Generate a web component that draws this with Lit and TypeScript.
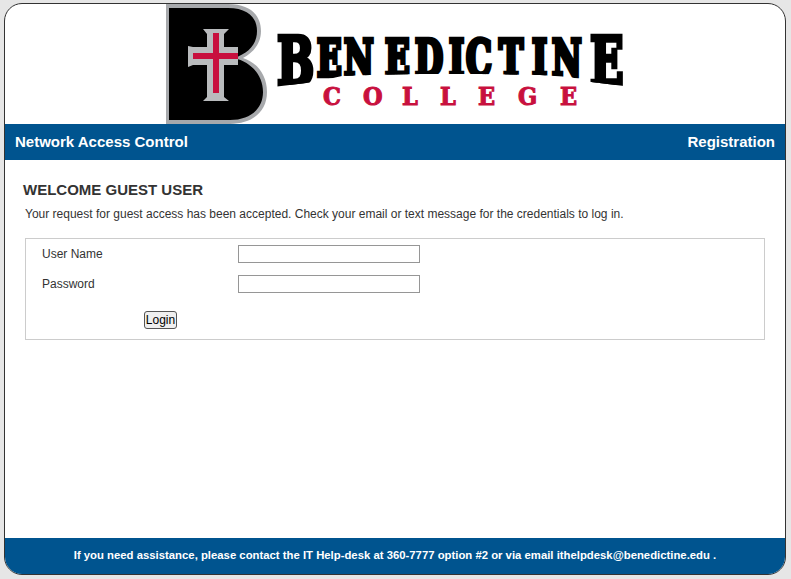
import { LitElement, html, css, svg } from "lit";
import { customElement } from "lit/decorators.js";

// Horizontal squeeze of the wordmark; left edges below are in logo coordinates.
const SQUEEZE = 0.72;
const at = (xs: number[]) => xs.map((x) => (x / SQUEEZE).toFixed(1)).join(" ");
const MID_X = [317, 344, 385, 415, 449, 466, 499, 532, 552];
const COLLEGE_X = [323, 363, 402, 440, 478, 518, 560];

@customElement("app-root")
export class AppRoot extends LitElement {
  static styles = css`
    :host {
      display: block;
      height: 579px;
      box-sizing: border-box;
      padding: 3px 5px 4px 4px;
      background: #e6e6e6;
      font-family: "Liberation Sans", Arial, sans-serif;
      color: #333;
    }
    .card {
      height: 100%;
      box-sizing: border-box;
      display: flex;
      flex-direction: column;
      background: #fff;
      border: 1px solid #333;
      border-radius: 18px;
      overflow: hidden;
    }
    .logo {
      height: 120px;
      display: flex;
      justify-content: center;
      flex: none;
    }
    .logo svg {
      display: block;
      margin-left: 4px;
    }
    .band {
      flex: none;
      height: 36px;
      box-sizing: border-box;
      padding: 0 10px 2px;
      background: #00548f;
      color: #fff;
      display: flex;
      align-items: center;
      justify-content: space-between;
      font-size: 15px;
      font-weight: bold;
    }
    main {
      flex: 1;
      padding: 21px 20px 0 18px;
    }
    h1 {
      margin: 0;
      font-size: 15px;
      line-height: 17px;
      font-weight: bold;
    }
    p {
      margin: 9px 0 0 2px;
      font-size: 12px;
      line-height: 14px;
    }
    form {
      margin: 17px 0 0 2px;
      border: 1px solid #ccc;
      height: 102px;
      box-sizing: border-box;
      padding: 6px 16px 0;
      display: flex;
      flex-direction: column;
    }
    .row {
      display: grid;
      grid-template-columns: 196px 182px;
      align-items: center;
      height: 18px;
      margin-bottom: 12px;
      font-size: 12px;
    }
    input {
      box-sizing: border-box;
      width: 182px;
      height: 18px;
      margin: 0;
      padding: 0 2px;
      border: 1px solid #969696;
      background: #fff;
      border-radius: 0;
    }
    button {
      align-self: flex-start;
      margin: 6px 0 0 102px;
      box-sizing: border-box;
      width: 33px;
      height: 18px;
      padding: 0;
      font: 12px "Liberation Sans", Arial, sans-serif;
      color: #000;
      background: #efefef;
      border: 1px solid #555;
      border-radius: 3px;
    }
    footer {
      flex: none;
      height: 36px;
      box-sizing: border-box;
      padding-bottom: 2px;
      background: #00548f;
      color: #fff;
      display: flex;
      align-items: center;
      justify-content: center;
      font-size: 11.33px;
      font-weight: bold;
    }
    .slab {
      font-family: "DejaVu Serif", serif;
      font-weight: bold;
      font-stretch: condensed;
    }
    .blk { fill: #000; stroke: #000; stroke-width: 4.4; stroke-linejoin: miter; }
    .red { fill: #c8103e; stroke: #c8103e; stroke-width: 1; font-size: 25px; }
    .big { font-size: 68px; }
    .mid { font-size: 50px; }
  `;

  private logo() {
    return html`<svg width="462" height="120" viewBox="166 4 462 120" role="img" aria-label="Benedictine College">
      <defs>
        <clipPath id="arch">
          <polygon points="270,20 630,20 624,86 591,82 570,77 540,75 480,74 420,74 370,75 342,76 315,82 277,86.5"></polygon>
        </clipPath>
      </defs>
      <path fill="#a7a9ac" d="M166 4H228C250 4 261 15 261 31C261 43 254 52 243 58C258 63 267 76 267 92C267 112 252 124 230 124H166Z"></path>
      <path fill="#000" d="M169 8H228C247 8 257 17 257 31C257 44 249 53 234 58C251 62 263 75 263 92C263 109 250 120 230 120H169Z"></path>
      <path fill="#b9bbbd" d="M203 29H229L224 34V47H238V65H224V97L229 101H203L207 97V65H193L188 67V46L193 47H207V34Z"></path>
      <path fill="#c8103e" d="M213 33H219V53H238V59H219V93H213V59H193V53H213Z"></path>
      <g clip-path="url(#arch)">
        <text class="slab blk" transform="scale(${SQUEEZE} 1)">${svg`<tspan class="big" x=${at([277])} y="85">B</tspan><tspan class="mid" x=${at(MID_X)} y="76">ENEDICTIN</tspan><tspan class="big" x=${at([590])} y="85">E</tspan>`}</text>
      </g>
      <text class="slab red" x=${COLLEGE_X.join(" ")} y="105">COLLEGE</text>
    </svg>`;
  }

  render() {
    return html`<div class="card">
      <div class="logo">${this.logo()}</div>
      <div class="band"><span>Network Access Control</span><span>Registration</span></div>
      <main>
        <h1>WELCOME GUEST USER</h1>
        <p>Your request for guest access has been accepted. Check your email or text message for the credentials to log in.</p>
        <form @submit=${(e: Event) => e.preventDefault()}>
          <label class="row"><span>User Name</span><input type="text" /></label>
          <label class="row"><span>Password</span><input type="password" /></label>
          <button type="submit">Login</button>
        </form>
      </main>
      <footer>If you need assistance, please contact the IT Help-desk at 360-7777 option #2 or via email ithelpdesk@benedictine.edu .</footer>
    </div>`;
  }
}
